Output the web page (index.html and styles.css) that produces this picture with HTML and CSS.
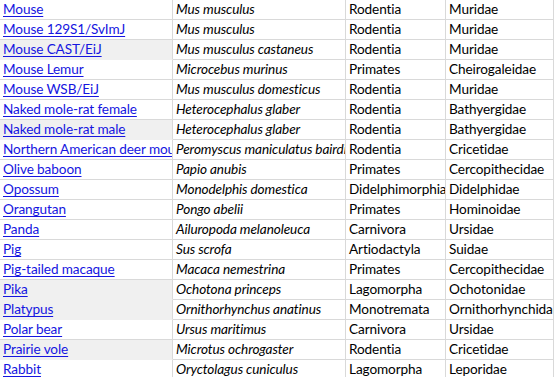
FILE: index.html
```html
<!DOCTYPE html>
<html lang="en">
<head>
  <meta charset="UTF-8" />
  <title>Species</title>
  <link rel="stylesheet" href="styles.css">
</head>
<body>
  <div class="sheet">
    <div class="row"><a class="cell name" href="#">Mouse</a><div class="cell sci">Mus musculus</div><div class="cell">Rodentia</div><div class="cell">Muridae</div></div>
    <div class="row"><a class="cell name" href="#">Mouse 129S1/SvImJ</a><div class="cell sci">Mus musculus</div><div class="cell">Rodentia</div><div class="cell">Muridae</div></div>
    <div class="row shade"><a class="cell name" href="#">Mouse CAST/EiJ</a><div class="cell sci">Mus musculus castaneus</div><div class="cell">Rodentia</div><div class="cell">Muridae</div></div>
    <div class="row"><a class="cell name" href="#">Mouse Lemur</a><div class="cell sci">Microcebus murinus</div><div class="cell">Primates</div><div class="cell">Cheirogaleidae</div></div>
    <div class="row"><a class="cell name" href="#">Mouse WSB/EiJ</a><div class="cell sci">Mus musculus domesticus</div><div class="cell">Rodentia</div><div class="cell">Muridae</div></div>
    <div class="row"><a class="cell name" href="#">Naked mole-rat female</a><div class="cell sci">Heterocephalus glaber</div><div class="cell">Rodentia</div><div class="cell">Bathyergidae</div></div>
    <div class="row shade"><a class="cell name" href="#">Naked mole-rat male</a><div class="cell sci">Heterocephalus glaber</div><div class="cell">Rodentia</div><div class="cell">Bathyergidae</div></div>
    <div class="row"><a class="cell name" href="#">Northern American deer mouse</a><div class="cell sci">Peromyscus maniculatus bairdii</div><div class="cell">Rodentia</div><div class="cell">Cricetidae</div></div>
    <div class="row"><a class="cell name" href="#">Olive baboon</a><div class="cell sci">Papio anubis</div><div class="cell">Primates</div><div class="cell">Cercopithecidae</div></div>
    <div class="row"><a class="cell name" href="#">Opossum</a><div class="cell sci">Monodelphis domestica</div><div class="cell">Didelphimorphia</div><div class="cell">Didelphidae</div></div>
    <div class="row"><a class="cell name" href="#">Orangutan</a><div class="cell sci">Pongo abelii</div><div class="cell">Primates</div><div class="cell">Hominoidae</div></div>
    <div class="row"><a class="cell name" href="#">Panda</a><div class="cell sci">Ailuropoda melanoleuca</div><div class="cell">Carnivora</div><div class="cell">Ursidae</div></div>
    <div class="row"><a class="cell name" href="#">Pig</a><div class="cell sci">Sus scrofa</div><div class="cell">Artiodactyla</div><div class="cell">Suidae</div></div>
    <div class="row"><a class="cell name" href="#">Pig-tailed macaque</a><div class="cell sci">Macaca nemestrina</div><div class="cell">Primates</div><div class="cell">Cercopithecidae</div></div>
    <div class="row shade"><a class="cell name" href="#">Pika</a><div class="cell sci">Ochotona princeps</div><div class="cell">Lagomorpha</div><div class="cell">Ochotonidae</div></div>
    <div class="row shade"><a class="cell name" href="#">Platypus</a><div class="cell sci">Ornithorhynchus anatinus</div><div class="cell">Monotremata</div><div class="cell">Ornithorhynchidae</div></div>
    <div class="row"><a class="cell name" href="#">Polar bear</a><div class="cell sci">Ursus maritimus</div><div class="cell">Carnivora</div><div class="cell">Ursidae</div></div>
    <div class="row shade"><a class="cell name" href="#">Prairie vole</a><div class="cell sci">Microtus ochrogaster</div><div class="cell">Rodentia</div><div class="cell">Cricetidae</div></div>
    <div class="row"><a class="cell name" href="#">Rabbit</a><div class="cell sci">Oryctolagus cuniculus</div><div class="cell">Lagomorpha</div><div class="cell">Leporidae</div></div>
  </div>
</body>
</html>
```

FILE: styles.css
```css
:root {
  --grid: #d9d9d9;
  --shade: #f0f0f0;
  --link: #1515e0;
  --text: #000;
}

html, body {
  margin: 0;
  overflow: hidden;
  background: #fff;
}

body {
  font-family: Lato, "Open Sans", sans-serif;
  font-size: 13.6px;
  letter-spacing: -0.1px;
  color: var(--text);
}

.sheet {
  width: 554px;
}

.row {
  display: grid;
  grid-template-columns: 173px 173px 100px 1fr;
  height: 20px;
}

.cell {
  box-sizing: border-box;
  height: 20px;
  padding: 0 3px;
  line-height: 19px;
  white-space: nowrap;
  overflow: hidden;
  border-right: 1px solid var(--grid);
  border-bottom: 1px solid var(--grid);
}

.name {
  color: var(--link);
  text-decoration: underline;
  text-underline-offset: 2px;
}

.sci {
  font-style: italic;
}

.row.shade .name {
  background: var(--shade);
  border-bottom-color: var(--shade);
}
```
